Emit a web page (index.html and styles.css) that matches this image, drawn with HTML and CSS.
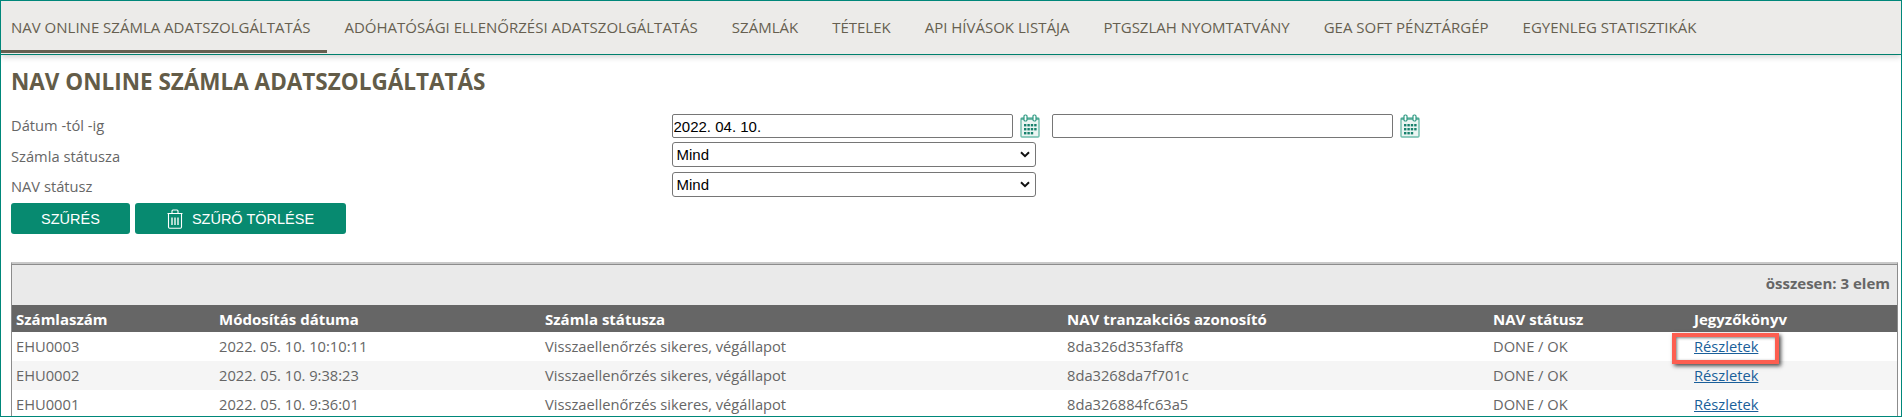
FILE: index.html
```html
<!DOCTYPE html>
<html lang="hu">
<head>
<meta charset="utf-8">
<title>NAV Online Számla Adatszolgáltatás</title>
<link rel="stylesheet" href="styles.css">
</head>
<body>
<div class="frame">
  <nav class="tabs">
    <a class="tab tab-active">NAV ONLINE SZÁMLA ADATSZOLGÁLTATÁS</a>
    <a class="tab">ADÓHATÓSÁGI ELLENŐRZÉSI ADATSZOLGÁLTATÁS</a>
    <a class="tab">SZÁMLÁK</a>
    <a class="tab">TÉTELEK</a>
    <a class="tab">API HÍVÁSOK LISTÁJA</a>
    <a class="tab">PTGSZLAH NYOMTATVÁNY</a>
    <a class="tab">GEA SOFT PÉNZTÁRGÉP</a>
    <a class="tab">EGYENLEG STATISZTIKÁK</a>
  </nav>
  <main class="content">
    <h1 class="title">NAV ONLINE SZÁMLA ADATSZOLGÁLTATÁS</h1>
    <form class="filters">
      <div class="row row-date">
        <label class="label label-high">Dátum -tól -ig</label>
        <input class="date-input" type="text" value="2022. 04. 10.">
        <svg class="cal" viewBox="0 0 20 24" width="20" height="24" aria-hidden="true">
          <rect x="1" y="4" width="18" height="19" rx="1" fill="#eaf5f2" stroke="#6dbcaa" stroke-width="1.4"/>
          <path d="M1 5h18" stroke="#3f9f8a" stroke-width="1.4"/>
          <rect x="4" y="1" width="3" height="6" rx="1.2" fill="#fff" stroke="#2f9a83" stroke-width="1.2"/>
          <rect x="13" y="1" width="3" height="6" rx="1.2" fill="#fff" stroke="#2f9a83" stroke-width="1.2"/>
          <g fill="#17806c">
            <rect x="4" y="10" width="2.4" height="2.4"/><rect x="7.4" y="10" width="2.4" height="2.4"/><rect x="10.8" y="10" width="2.4" height="2.4"/><rect x="14.2" y="10" width="2.4" height="2.4"/>
            <rect x="4" y="14" width="2.4" height="2.4"/><rect x="7.4" y="14" width="2.4" height="2.4"/><rect x="10.8" y="14" width="2.4" height="2.4"/><rect x="14.2" y="14" width="2.4" height="2.4"/>
            <rect x="4" y="18" width="2.4" height="2.4"/><rect x="7.4" y="18" width="2.4" height="2.4"/><rect x="10.8" y="18" width="2.4" height="2.4"/>
          </g>
        </svg>
        <input class="date-input date-second" type="text">
        <svg class="cal" viewBox="0 0 20 24" width="20" height="24" aria-hidden="true">
          <rect x="1" y="4" width="18" height="19" rx="1" fill="#eaf5f2" stroke="#6dbcaa" stroke-width="1.4"/>
          <path d="M1 5h18" stroke="#3f9f8a" stroke-width="1.4"/>
          <rect x="4" y="1" width="3" height="6" rx="1.2" fill="#fff" stroke="#2f9a83" stroke-width="1.2"/>
          <rect x="13" y="1" width="3" height="6" rx="1.2" fill="#fff" stroke="#2f9a83" stroke-width="1.2"/>
          <g fill="#17806c">
            <rect x="4" y="10" width="2.4" height="2.4"/><rect x="7.4" y="10" width="2.4" height="2.4"/><rect x="10.8" y="10" width="2.4" height="2.4"/><rect x="14.2" y="10" width="2.4" height="2.4"/>
            <rect x="4" y="14" width="2.4" height="2.4"/><rect x="7.4" y="14" width="2.4" height="2.4"/><rect x="10.8" y="14" width="2.4" height="2.4"/><rect x="14.2" y="14" width="2.4" height="2.4"/>
            <rect x="4" y="18" width="2.4" height="2.4"/><rect x="7.4" y="18" width="2.4" height="2.4"/><rect x="10.8" y="18" width="2.4" height="2.4"/>
          </g>
        </svg>
      </div>
      <div class="row row-select">
        <label class="label label-low">Számla státusza</label>
        <select class="select"><option>Mind</option></select>
      </div>
      <div class="row row-select">
        <label class="label label-low">NAV státusz</label>
        <select class="select"><option>Mind</option></select>
      </div>
      <div class="actions">
        <button class="btn btn-filter" type="button">SZŰRÉS</button>
        <button class="btn btn-clear" type="button">
          <svg class="trash" viewBox="0 0 16 20" width="16" height="20" aria-hidden="true">
            <path d="M.5 4.5h15M5 4V2a1 1 0 0 1 1-1h4a1 1 0 0 1 1 1v2M1.5 5v13a1.2 1.2 0 0 0 1.2 1.2h10.6a1.2 1.2 0 0 0 1.2-1.2V5" fill="none" stroke="#fff" stroke-width="1.1"/>
            <path d="M5 8.5v7.5M8 8.5v7.5M11 8.5v7.5" fill="none" stroke="#cfe8e1" stroke-width="1.7"/>
          </svg>
          SZŰRŐ TÖRLÉSE
        </button>
      </div>
    </form>
    <section class="panel">
      <div class="panel-head">összesen: 3 elem</div>
      <table class="grid">
        <colgroup>
          <col class="c1"><col class="c2"><col class="c3"><col class="c4"><col class="c5"><col class="c6">
        </colgroup>
        <thead>
          <tr><th>Számlaszám</th><th>Módosítás dátuma</th><th>Számla státusza</th><th>NAV tranzakciós azonosító</th><th>NAV státusz</th><th>Jegyzőkönyv</th></tr>
        </thead>
        <tbody>
          <tr><td>EHU0003</td><td>2022. 05. 10. 10:10:11</td><td>Visszaellenőrzés sikeres, végállapot</td><td>8da326d353faff8</td><td>DONE / OK</td><td class="link-cell"><a class="link" href="#">Részletek</a><span class="callout"></span></td></tr>
          <tr class="alt"><td>EHU0002</td><td>2022. 05. 10. 9:38:23</td><td>Visszaellenőrzés sikeres, végállapot</td><td>8da3268da7f701c</td><td>DONE / OK</td><td><a class="link" href="#">Részletek</a></td></tr>
          <tr><td>EHU0001</td><td>2022. 05. 10. 9:36:01</td><td>Visszaellenőrzés sikeres, végállapot</td><td>8da326884fc63a5</td><td>DONE / OK</td><td><a class="link" href="#">Részletek</a></td></tr>
        </tbody>
      </table>
    </section>
  </main>
</div>
</body>
</html>
```
FILE: styles.css
```css
* { box-sizing: border-box; }
html, body { margin: 0; padding: 0; background: #fff; }
body { font-family: "Open Sans", sans-serif; color: #666; overflow: hidden; }

.frame {
  width: 1902px;
  height: 417px;
  border: 1px solid #00877a;
  overflow: hidden;
  background: #fff;
}

.tabs {
  display: flex;
  height: 54px;
  background: #ecebe9;
  border-bottom: 1px solid #00806e;
  box-shadow: 0 2px 6px rgba(0, 0, 0, .18);
}
.tab {
  display: block;
  height: 53px;
  padding: 0 17px;
  font-size: 15px;
  line-height: 53px;
  color: #665f50;
  white-space: nowrap;
}
.tab-active {
  height: 52px;
  padding-left: 10px;
  border-bottom: 3px solid #665f50;
}

.content { padding: 0 3px 0 10px; }

.title {
  margin: 11px 0 0;
  font-size: 22.5px;
  line-height: 32px;
  font-weight: 700;
  color: #635c48;
}

.filters { margin-top: 16px; }
.row { display: flex; align-items: center; }
.row-date { height: 24px; }
.row-select { height: 25px; margin-top: 5px; }
.row-date + .row-select { margin-top: 4px; }
.label { width: 660.5px; flex: none; font-size: 14.7px; color: #666; }
.label-high { padding-bottom: 2px; }
.label-low { padding-top: 2px; }
.date-input {
  width: 341px;
  height: 24px;
  padding: 1px 2px 1px 1px;
  border: 1px solid #767676;
  border-radius: 2px;
  font: 15px "Liberation Sans", sans-serif;
  color: #000;
}
.date-second { margin-left: 12px; }
.cal { flex: none; margin-left: 7px; }
.select {
  width: 364px;
  height: 25px;
  padding: 0 0 0 4px;
  border: 1px solid #767676;
  border-radius: 3px;
  appearance: none;
  background: #fff url("data:image/svg+xml,%3Csvg xmlns='http://www.w3.org/2000/svg' width='10' height='7' viewBox='0 0 10 7'%3E%3Cpath d='M1 1.2l4 4 4-4' fill='none' stroke='%23111' stroke-width='2'/%3E%3C/svg%3E") no-repeat right 5px center;
  font: 15px "Liberation Sans", sans-serif;
  color: #000;
}

.actions { display: flex; gap: 5px; margin-top: 6px; }
.btn {
  display: flex;
  align-items: center;
  justify-content: center;
  height: 31px;
  padding: 0;
  border: 0;
  border-radius: 3px;
  background: #078a70;
  color: #fff;
  font: 14.5px "Liberation Sans", sans-serif;
}
.btn-filter { width: 119px; }
.btn-clear { width: 211px; gap: 9px; }
.trash { flex: none; }

.panel {
  margin-top: 28px;
  border-top: 2px solid #c9c9c9;
  border-left: 1px solid #8c8c8c;
  border-right: 1px solid #8c8c8c;
}
.panel-head {
  height: 41px;
  padding-right: 7px;
  border-top: 1px solid #8c8c8c;
  background: #eaeaea;
  text-align: right;
  font-size: 15px;
  font-weight: 700;
  line-height: 37px;
  color: #666;
}

.grid { width: 100%; border-collapse: collapse; table-layout: fixed; font-size: 14.7px; }
.c1 { width: 203px; }
.c2 { width: 326px; }
.c3 { width: 522px; }
.c4 { width: 426px; }
.c5 { width: 201px; }
.grid th {
  height: 27px;
  padding: 0 4px;
  background: #666;
  color: #fff;
  font-size: 15px;
  font-weight: 700;
  text-align: left;
}
.grid td { height: 29px; padding: 0 4px 2px; color: #666; white-space: nowrap; }
.alt td { background: #f5f5f5; }
.link-cell { position: relative; }
.link { color: #1a5f9a; text-decoration: underline; }
.callout {
  position: absolute;
  left: -18px;
  top: 1px;
  width: 107px;
  height: 31px;
  border: 4px solid #fd5e50;
  box-shadow: 2px 2px 4px rgba(0, 0, 0, .7), inset 1px 1px 3px rgba(0, 0, 0, .5);
  pointer-events: none;
}
```
